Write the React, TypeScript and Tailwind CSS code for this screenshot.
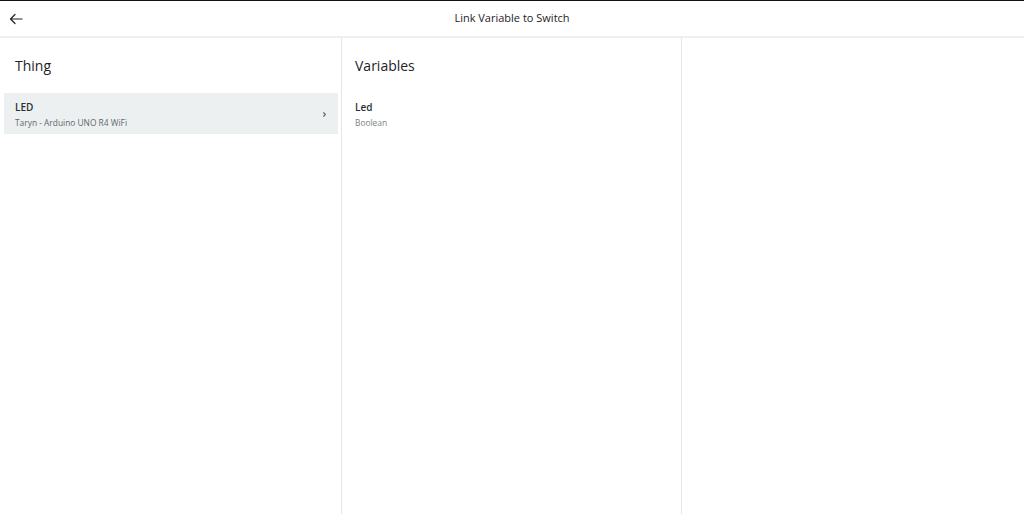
const font = { fontFamily: '"Open Sans", "Noto Sans", sans-serif' };

function ChevronRight() {
    return (
        <svg className="w-[7px] h-[7px] text-[#5c6366]" viewBox="0 0 8 8" fill="none" stroke="currentColor">
            <path strokeWidth={1.3} strokeLinecap="round" strokeLinejoin="round" d="M3 2l2 2-2 2" />
        </svg>
    );
}

function ArrowLeft() {
    return (
        <svg className="w-[14px] h-[14px] text-[#1f2326]" viewBox="0 0 14 14" fill="none" stroke="currentColor">
            <path strokeWidth={1.2} strokeLinecap="round" strokeLinejoin="round" d="M13 7H1.5M6 2.5L1.5 7 6 11.5" />
        </svg>
    );
}

export default function App() {
    const things = [{ name: 'LED', device: 'Taryn - Arduino UNO R4 WiFi' }];
    const variables = [{ name: 'Led', type: 'Boolean' }];

    return (
        <div className="w-[1024px] h-[516px] bg-white flex flex-col overflow-hidden" style={font}>
            {/* Header */}
            <div className="h-[38px] shrink-0 border-t border-t-[#111] border-b-2 border-b-[#eef0f0] flex items-center relative">
                <button className="absolute left-[8px] top-[10px] w-[16px] h-[16px] flex items-center justify-center">
                    <ArrowLeft />
                </button>
                <h1 className="w-full text-center text-[11px] text-[#1f2326]">Link Variable to Switch</h1>
            </div>

            {/* Columns */}
            <div className="flex-1 flex pb-[2px]">
                <div className="w-[342px] border-r border-[#e2e4e5] flex flex-col">
                    <h2 className="pl-[15px] pt-[17px] h-[55px] text-[14px] text-[#1f2326]">Thing</h2>
                    <div className="pl-[4px] pr-[3px]">
                        {things.map((t, idx) => (
                            <div key={idx} className="h-[41px] bg-[#ecf0f1] flex items-center pt-[2px] pl-[11px] pr-[10px]">
                                <div className="flex-1">
                                    <p className="text-[10px] font-semibold text-[#2a2f32] leading-[14px]">{t.name}</p>
                                    <p className="text-[8.4px] text-[#5f686b] leading-[14px] mt-[2px]">{t.device}</p>
                                </div>
                                <ChevronRight />
                            </div>
                        ))}
                    </div>
                </div>
                <div className="w-[340px] border-r border-[#e2e4e5] flex flex-col">
                    <h2 className="pl-[13px] pt-[17px] h-[55px] text-[14px] text-[#1f2326]">Variables</h2>
                    <div className="px-[2px]">
                        {variables.map((v, idx) => (
                            <div key={idx} className="h-[41px] flex items-center pt-[2px] pl-[11px]">
                                <div>
                                    <p className="text-[10px] font-semibold text-[#2a2f32] leading-[14px]">{v.name}</p>
                                    <p className="text-[8.4px] text-[#7a8385] leading-[14px] mt-[2px]">{v.type}</p>
                                </div>
                            </div>
                        ))}
                    </div>
                </div>
                <div className="flex-1" />
            </div>
        </div>
    );
}
